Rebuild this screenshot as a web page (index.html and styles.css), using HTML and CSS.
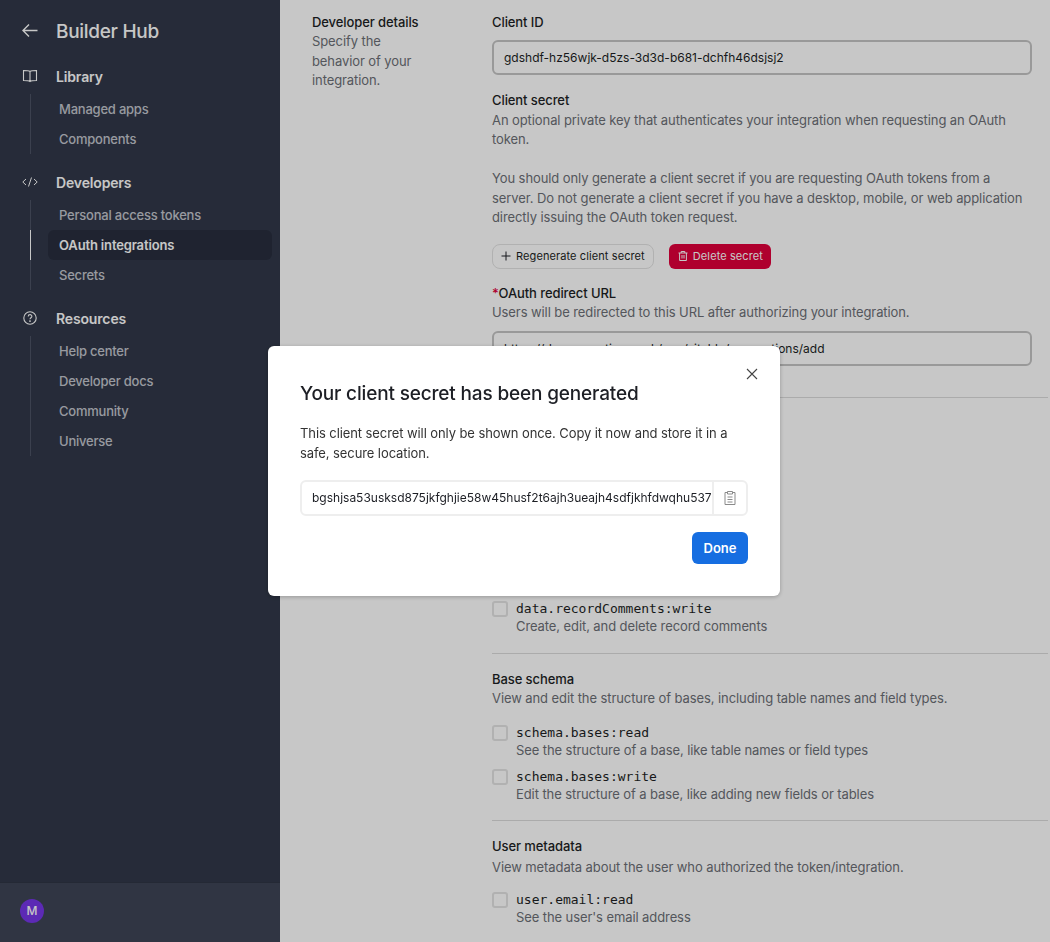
FILE: index.html
```html
<!DOCTYPE html>
<html lang="en">
<head>
    <meta charset="UTF-8">
    <meta name="viewport" content="width=device-width, initial-scale=1.0">
    <title>Builder Hub - OAuth integrations</title>
    <link rel="stylesheet" href="styles.css">
</head>

<body>
    <aside class="sidebar">
        <div class="sidebar-top">
            <div class="brand">
                <svg class="brand-back" width="18" height="18" viewBox="0 0 18 18" fill="none" stroke="currentColor" stroke-width="1.4"><path d="M15.5 8.500H1M7 2.500L1 8.500l6 6"/></svg>
                <span class="brand-name">Builder Hub</span>
            </div>

            <div class="nav-group">
                <div class="nav-title">
                    <svg width="16" height="16" viewBox="0 0 16 16" fill="none" stroke="currentColor" stroke-width="1.1"><path d="M8 3.5C7 2.8 6 2.5 1.5 2.5v10c4.500 0 5.500.3 6.500 1 1-.7 2-1 6.500-1v-10C10 2.500 9 2.800 8 3.500zM8 3.500v10"/></svg>
                    <span>Library</span>
                </div>
                <ul class="nav-list">
                    <li>Managed apps</li>
                    <li>Components</li>
                </ul>
            </div>

            <div class="nav-group">
                <div class="nav-title">
                    <svg width="16" height="16" viewBox="0 0 16 16" fill="none" stroke="currentColor" stroke-width="1"><path d="M4 5L.8 8 4 11M12 5l3.200 3L12 11M9.500 3.500l-3 9"/></svg>
                    <span>Developers</span>
                </div>
                <ul class="nav-list">
                    <li>Personal access tokens</li>
                    <li class="active">OAuth integrations</li>
                    <li>Secrets</li>
                </ul>
            </div>

            <div class="nav-group">
                <div class="nav-title">
                    <svg width="16" height="16" viewBox="0 0 16 16" fill="none" stroke="currentColor" stroke-width="1.100"><circle cx="8" cy="8" r="6.200"/><path d="M6.200 6.400c0-2.300 3.700-2.300 3.700-.1 0 1.400-1.900 1.500-1.900 3"/><circle cx="8" cy="11.100" r=".4"/></svg>
                    <span>Resources</span>
                </div>
                <ul class="nav-list">
                    <li>Help center</li>
                    <li>Developer docs</li>
                    <li>Community</li>
                    <li>Universe</li>
                </ul>
            </div>
        </div>

        <div class="sidebar-footer">
            <div class="avatar">M</div>
        </div>
    </aside>

    <main class="main">
        <section class="form-row">
            <div class="form-side">
                <h3>Developer details</h3>
                <p>Specify the behavior of your integration.</p>
            </div>
            <div class="form-fields">
                <label class="field-label">Client ID</label>
                <div class="text-input">gdshdf-hz56wjk-d5zs-3d3d-b681-dchfh46dsjsj2</div>

                <label class="field-label secret-label">Client secret</label>
                <p class="hint">An optional private key that authenticates your integration when requesting an OAuth token.</p>
                <p class="hint hint-gap">You should only generate a client secret if you are requesting OAuth tokens from a server. Do not generate a client secret if you have a desktop, mobile, or web application directly issuing the OAuth token request.</p>

                <div class="secret-buttons">
                    <button class="btn-outline">
                        <svg width="12" height="12" viewBox="0 0 12 12" fill="none" stroke="currentColor" stroke-width="1"><path d="M6 1.500v9M1.500 6h9"/></svg>
                        Regenerate client secret
                    </button>
                    <button class="btn-danger">
                        <svg width="12" height="12" viewBox="0 0 12 12" fill="none" stroke="currentColor" stroke-width="1"><path d="M1.500 3h9M4.200 3V1.500h3.600V3M2.600 3v7.500h6.800V3M5 5v3.500M7 5v3.500"/></svg>
                        Delete secret
                    </button>
                </div>

                <label class="field-label redirect-label"><span class="required">*</span>OAuth redirect URL</label>
                <p class="hint">Users will be redirected to this URL after authorizing your integration.</p>
                <div class="text-input redirect-input">https://demo.creation.work/app/sitable/connections/add</div>
            </div>
        </section>

        <section class="form-row scopes">
            <div class="form-side"></div>
            <div class="form-fields">
                <div class="scope-group scope-group-data">
                    <div class="scope-list">
                        <div class="scope">
                            <span class="checkbox"></span>
                            <div><code>data.recordComments:write</code><p class="hint">Create, edit, and delete record comments</p></div>
                        </div>
                    </div>
                </div>

                <div class="scope-group scope-group-schema">
                    <h4>Base schema</h4>
                    <p class="hint">View and edit the structure of bases, including table names and field types.</p>
                    <div class="scope-list">
                        <div class="scope">
                            <span class="checkbox"></span>
                            <div><code>schema.bases:read</code><p class="hint">See the structure of a base, like table names or field types</p></div>
                        </div>
                        <div class="scope">
                            <span class="checkbox"></span>
                            <div><code>schema.bases:write</code><p class="hint">Edit the structure of a base, like adding new fields or tables</p></div>
                        </div>
                    </div>
                </div>

                <div class="scope-group scope-group-user">
                    <h4>User metadata</h4>
                    <p class="hint">View metadata about the user who authorized the token/integration.</p>
                    <div class="scope-list">
                        <div class="scope">
                            <span class="checkbox"></span>
                            <div><code>user.email:read</code><p class="hint">See the user's email address</p></div>
                        </div>
                    </div>
                </div>
            </div>
        </section>
    </main>

    <!-- dialog over the dimmed page -->
    <div class="overlay">
        <div class="modal">
            <button class="modal-close" aria-label="Close">
                <svg width="14" height="14" viewBox="0 0 14 14" fill="none" stroke="currentColor" stroke-width="1.100"><path d="M2 2l10 10M12 2L2 12"/></svg>
            </button>
            <h2>Your client secret has been generated</h2>
            <p>This client secret will only be shown once. Copy it now and store it in a safe, secure location.</p>
            <div class="copy-field">
                <span class="copy-value">bgshjsa53usksd875jkfghjie58w45husf2t6ajh3ueajh4sdfjkhfdwqhu537</span>
                <span class="copy-button">
                    <svg width="14" height="16" viewBox="0 0 14 16" fill="none" stroke="currentColor" stroke-width="1"><path d="M4.500 2.500H2v12h10v-12H9.500M4.500 1.500h5v2.500h-5zM4.500 7h5M4.500 9.500h5M4.500 12h5"/></svg>
                </span>
            </div>
            <div class="modal-actions">
                <button class="btn-primary">Done</button>
            </div>
        </div>
    </div>
</body>
</html>
```

FILE: styles.css
```css
* {
    box-sizing: border-box;
}

html, body {
    height: 100%;
}

body {
    display: flex;
    margin: 0;
    overflow: hidden;
    font-family: 'Inter', 'Liberation Sans', sans-serif;
    font-size: 13px;
    letter-spacing: -0.09px;
    color: #1d1f25;
    background-color: #ffffff;
}

h2, h3, h4, p, ul {
    margin: 0;
    padding: 0;
}

button {
    font-family: inherit;
    cursor: pointer;
}

/* sidebar */
.sidebar {
    display: flex;
    flex-direction: column;
    justify-content: space-between;
    flex: 0 0 280px;
    color: #ffffff;
    background-color: #313849;
}

.sidebar-top {
    padding: 16px 8px 0 22px;
}

.brand {
    display: flex;
    align-items: center;
    height: 30px;
    margin-bottom: 16px;
}

.brand-back {
    flex: none;
    margin-right: 16px;
}

.brand-name {
    font-size: 19px;
    font-weight: 500;
    letter-spacing: -0.3px;
}

.nav-group {
    margin-bottom: 14px;
}

.nav-title {
    display: flex;
    align-items: center;
    height: 30px;
    padding-bottom: 2px;
    font-size: 14px;
    font-weight: 600;
    letter-spacing: -0.15px;
}

.nav-title svg {
    flex: none;
    margin-right: 18px;
}

.nav-list {
    margin: 2px 0 0 8px;
    list-style: none;
    border-left: 1px solid #4c5364;
}

.nav-list li {
    position: relative;
    height: 30px;
    margin-left: 17px;
    padding-left: 11px;
    font-weight: 500;
    line-height: 30px;
    letter-spacing: -0.22px;
    color: #c3c6ce;
    border-radius: 6px;
}

.nav-list li.active {
    font-weight: 600;
    letter-spacing: -0.15px;
    color: #ffffff;
    background-color: #282e3e;
}

.nav-list li.active::before {
    content: "";
    position: absolute;
    top: 0;
    bottom: 0;
    left: -18px;
    width: 1px;
    background-color: #ffffff;
}

.sidebar-footer {
    display: flex;
    align-items: center;
    height: 60px;
    padding: 0 0 4px 20px;
    background-color: #3e4556;
    border-top: 1px solid #2f3545;
}

.avatar {
    width: 24px;
    height: 24px;
    font-size: 12px;
    font-weight: 500;
    line-height: 24px;
    text-align: center;
    color: #ffffff;
    background-color: #7636e8;
    border-radius: 50%;
}

/* main form */
.main {
    flex: 1;
    padding: 12px 2px 0 32px;
}

.form-row {
    display: flex;
}

.form-side {
    flex: 0 0 180px;
    padding-right: 60px;
}

.form-side h3 {
    font-size: 13px;
    font-weight: 500;
    line-height: 20px;
}

.form-side p {
    line-height: 19.5px;
    color: #6c6f76;
}

.form-fields {
    flex: 1;
    padding-right: 16px;
}

.field-label {
    display: block;
    font-weight: 500;
    line-height: 20px;
}

.secret-label {
    margin-top: 15px;
}

.secret-label + .hint {
    margin-top: 0.5px;
}

.redirect-label {
    margin-top: 14px;
}

.required {
    color: #e1003c;
}

.hint {
    line-height: 19.5px;
    color: #6c6f76;
}

.hint-gap {
    margin-top: 19.5px;
}

.text-input {
    height: 35px;
    margin-top: 8px;
    padding: 0 10px;
    font-size: 12px;
    letter-spacing: 0;
    line-height: 31px;
    background-color: #ffffff;
    border: 2px solid #c4c4c4;
    border-radius: 6px;
}

.redirect-input {
    margin-top: 9px;
}

.secret-buttons {
    display: flex;
    gap: 15px;
    margin-top: 16px;
}

.btn-outline, .btn-danger {
    display: flex;
    align-items: center;
    gap: 4px;
    height: 25px;
    padding: 0 8px;
    font-size: 11px;
    font-weight: 400;
    letter-spacing: 0.1px;
    border-radius: 6px;
}

.btn-outline {
    padding-left: 7px;
    color: #1d1f25;
    background-color: #ffffff;
    border: 1px solid #e3e3e3;
    border-radius: 8px;
}

.btn-danger {
    color: #ffffff;
    background-color: #e1003c;
    border: none;
}

.scopes {
    margin-top: 31px;
    border-top: 1px solid #dcdcdc;
}

.scope-group {
    margin-right: -16px;
    padding: 15px 16px 16px 0;
    border-bottom: 1px solid #dcdcdc;
}

.scope-group:last-child {
    border-bottom: none;
}

.scope-group h4 {
    font-size: 13px;
    font-weight: 500;
    line-height: 20px;
}

.scope-group-data {
    padding-top: 186px;
}

.scope-group-user h4 {
    margin-bottom: 2px;
}

.scope-list {
    margin-top: 15px;
}

.scope-group-user .scope-list {
    margin-top: 12px;
}

.scope {
    display: flex;
    gap: 8px;
    margin-bottom: 6px;
}

.scope:last-child {
    margin-bottom: 0;
}

.scope code {
    display: block;
    margin-top: 2px;
    font-family: 'DejaVu Sans Mono', 'Liberation Mono', monospace;
    font-size: 13px;
    letter-spacing: 0;
    line-height: 16px;
}

.checkbox {
    flex: none;
    width: 16px;
    height: 16px;
    margin-top: 2px;
    background-color: #ffffff;
    border: 2px solid #e3e3e3;
    border-radius: 3px;
}

/* modal */
.overlay {
    position: fixed;
    top: 0;
    right: 0;
    bottom: 0;
    left: 0;
    display: flex;
    align-items: center;
    justify-content: center;
    padding-right: 2px;
    background-color: rgba(0, 0, 0, 0.22);
}

.modal {
    position: relative;
    width: 512px;
    height: 250px;
    padding: 32px;
    background-color: #ffffff;
    border-radius: 6px;
    box-shadow: 0 1px 4px rgba(0, 0, 0, 0.25);
}

.modal h2 {
    padding-top: 1px;
    font-size: 19px;
    font-weight: 500;
    letter-spacing: -0.16px;
    line-height: 30px;
}

.modal p {
    margin-top: 14px;
    line-height: 20px;
    color: #333333;
}

.modal-close {
    position: absolute;
    top: 21px;
    right: 21px;
    display: flex;
    padding: 0;
    color: #444444;
    background: none;
    border: none;
}

.copy-field {
    display: flex;
    height: 36px;
    margin-top: 17px;
    border: 2px solid #eeeeee;
    border-radius: 6px;
}

.copy-value {
    flex: 1;
    padding-left: 10px;
    overflow: hidden;
    font-size: 12px;
    letter-spacing: 0;
    line-height: 32px;
    white-space: nowrap;
    border-right: 2px solid #eeeeee;
}

.copy-button {
    display: flex;
    align-items: center;
    justify-content: center;
    flex: 0 0 32px;
    color: #8a8a8a;
}

.modal-actions {
    display: flex;
    justify-content: flex-end;
    margin-top: 16px;
}

.btn-primary {
    width: 56px;
    height: 32px;
    font-size: 13px;
    font-weight: 600;
    color: #ffffff;
    background-color: #166ee1;
    border: none;
    border-radius: 6px;
}
```
